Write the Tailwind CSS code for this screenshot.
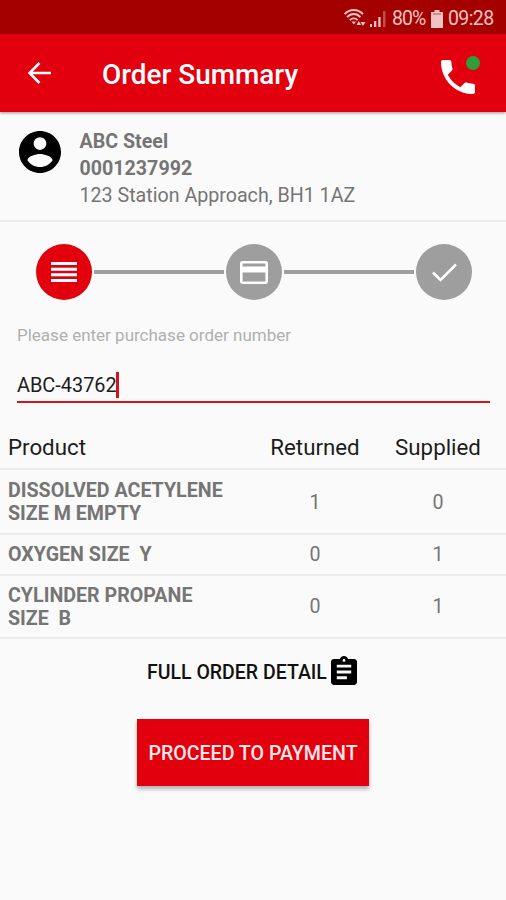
<!DOCTYPE html>
<html lang="en">

<head>
  <meta charset="UTF-8">
  <meta name="viewport" content="width=device-width, initial-scale=1.0">
  <title>Order Summary</title>
  <script src="https://cdn.jsdelivr.net/npm/@tailwindcss/browser@4"></script>
</head>

<body class="bg-[#fafafa] min-h-screen flex flex-col font-['Roboto',sans-serif] text-[#757575] overflow-hidden">
  <!-- Status bar -->
  <div class="h-[34px] bg-[#a50000] flex items-center justify-end pr-3 pt-[3px] text-[#f0c4c4] text-[19.5px]">
    <svg class="w-[24px] h-[19px] -mt-[3px]" viewBox="0 0 23 19" fill="none" stroke="currentColor" stroke-width="1.9">
      <path d="M1 6.2C6 0.5 14.500 0.500 19.500 6.200M3.600 9.200C7.500 5 13 5 16.900 9.200M6.300 12.200C8.500 9.800 12 9.800 14.200 12.200" />
      <path d="M8 13.600h4.600l-2.300 3z" fill="currentColor" stroke="none" />
      <path d="M13 17l2.300-4 2.300 4zM17 14h5l-2.500 4z" fill="currentColor" stroke="none" />
    </svg>
    <svg class="w-[18px] h-[18px] ml-[2px]" viewBox="0 0 18 18" fill="currentColor">
      <path d="M1 14h2v3H1zM5 11h2.300v6H5zM9.300 7h2.300v10H9.300z" />
      <path d="M14 1h2.500v16H14z" opacity=".4" />
    </svg>
    <span class="ml-[5px] w-[34px] whitespace-nowrap tracking-[-0.9px]">80%</span>
    <svg class="w-[12px] h-[18px] ml-[5px]" viewBox="0 0 12 18" fill="currentColor">
      <path d="M3.500 0h5v2H12v16H0V2h3.500z" />
      <path d="M2 4h8" stroke="#a50000" stroke-width="1" opacity=".6" />
    </svg>
    <span class="ml-[5px] w-[46px] whitespace-nowrap tracking-[-0.6px]">09:28</span>
  </div>

  <!-- App bar -->
  <header class="h-[78px] bg-[#e2000f] flex items-center px-[27px] shadow-[0_1px_3px_rgba(0,0,0,0.4)]">
    <svg class="w-6 h-6" viewBox="0 0 24 24" fill="none" stroke="#fff" stroke-width="2.500">
      <path d="M12.500 2L2.500 12l10 10M2.500 12H24" />
    </svg>
    <h1 class="ml-[51px] pt-[4px] text-[27.9px] font-medium text-white whitespace-nowrap">Order Summary</h1>
    <div class="relative ml-auto mr-[4px] mt-[8px]">
      <svg class="w-[34px] h-[34px]" viewBox="3 3 18 18" fill="#fff">
        <path d="M6.620 10.790c1.440 2.830 3.760 5.140 6.590 6.590l2.200-2.200c.270-.270.670-.360 1.020-.240 1.120.370 2.330.570 3.570.570.550 0 1 .450 1 1V20c0 .550-.450 1-1 1-9.390 0-17-7.610-17-17 0-.550.450-1 1-1h3.500c.550 0 1 .450 1 1 0 1.250.200 2.450.570 3.570.110.350.030.740-.250 1.020l-2.200 2.200z" />
      </svg>
      <span class="absolute -right-[5px] -top-[4px] w-[14px] h-[14px] rounded-full bg-[#2e9e3a]"></span>
    </div>
  </header>

  <!-- Customer -->
  <section class="h-[110px] flex pl-[19px] pt-[17px] border-b-2 border-[#ececec]">
    <svg class="w-[42px] h-[42px] mt-[2px]" viewBox="2 2 20 20">
      <path fill="#000" d="M12 2C6.480 2 2 6.480 2 12s4.480 10 10 10 10-4.480 10-10S17.520 2 12 2zm0 3c1.660 0 3 1.340 3 3s-1.340 3-3 3-3-1.340-3-3 1.340-3 3-3zm0 14.200c-2.500 0-4.710-1.280-6-3.220.030-1.990 4-3.080 6-3.080 1.990 0 5.970 1.090 6 3.080-1.290 1.940-3.500 3.220-6 3.220z" />
    </svg>
    <div class="ml-[18.500px] text-[19.65px] leading-[26.800px] whitespace-nowrap">
      <p class="font-bold">ABC Steel</p>
      <p class="font-bold">0001237992</p>
      <p>123 Station Approach, BH1 1AZ</p>
    </div>
  </section>

  <!-- Steps -->
  <div class="flex items-center pl-[36px] pr-[34px] mt-[22px]">
    <div class="w-14 h-14 rounded-full bg-[#e2000f] flex items-center justify-center">
      <svg class="w-[26px] h-[22px]" viewBox="0 0 26 22" fill="#fff">
        <path d="M0 1h26v3H0zM0 6.700h26v3H0zM0 12.300h26v3H0zM0 18h26v3H0z" />
      </svg>
    </div>
    <div class="h-1 flex-1 mx-[2px] bg-[#9e9e9e]"></div>
    <div class="w-14 h-14 rounded-full bg-[#9e9e9e] flex items-center justify-center">
      <svg class="w-[28px] h-[23px]" viewBox="0 0 28 23" fill="none" stroke="#fff">
        <rect x="1.300" y="1.300" width="25.400" height="20.400" rx="1.500" stroke-width="2.600" />
        <path d="M1 8.500h26" stroke-width="6" />
      </svg>
    </div>
    <div class="h-1 flex-1 mx-[2px] bg-[#9e9e9e]"></div>
    <div class="w-14 h-14 rounded-full bg-[#9e9e9e] flex items-center justify-center">
      <svg class="w-[25px] h-[19px]" viewBox="0 0 25 19" fill="none" stroke="#fff" stroke-width="2.500">
        <path d="M1 9.500l7.500 7.500L24 1.500" />
      </svg>
    </div>
  </div>

  <!-- Purchase order number -->
  <div class="ml-[17px] mr-4 mt-[23px]">
    <label class="block h-[24px] leading-[24px] text-[17px] text-[#b0b0b0] whitespace-nowrap">Please enter purchase order number</label>
    <div class="flex items-center h-[31px] mt-[22px] pb-[1px] border-b-2 border-[#d0161c] text-[19.9px] text-[#1c1c1c] box-content">
      <span class="pt-[3px] w-[99px] whitespace-nowrap">ABC-43762</span>
      <span class="w-[3px] h-[26px] bg-[#d0161c]"></span>
    </div>
  </div>

  <!-- Products -->
  <div class="mt-[24px] text-[19.65px] leading-[23px] whitespace-nowrap">
    <div class="h-[43px] grid grid-cols-[245px_124px_122px] items-center pl-2 text-[22.3px] text-[#1c1c1c] border-b-2 border-[#ececec]">
      <span>Product</span>
      <span class="text-center">Returned</span>
      <span class="text-center">Supplied</span>
    </div>
    <div class="h-[65px] grid grid-cols-[245px_124px_122px] items-center pl-2 pt-[1px] border-b-2 border-[#ececec]">
      <span class="font-bold">DISSOLVED ACETYLENE<br>SIZE M EMPTY</span>
      <span class="text-center">1</span>
      <span class="text-center">0</span>
    </div>
    <div class="h-[41px] grid grid-cols-[245px_124px_122px] items-center pl-2 border-b-2 border-[#ececec]">
      <span class="font-bold">OXYGEN SIZE&nbsp; Y</span>
      <span class="text-center">0</span>
      <span class="text-center">1</span>
    </div>
    <div class="h-[63px] grid grid-cols-[245px_124px_122px] items-center pl-2 border-b-2 border-[#ececec]">
      <span class="font-bold">CYLINDER PROPANE<br>SIZE&nbsp; B</span>
      <span class="text-center">0</span>
      <span class="text-center">1</span>
    </div>
  </div>

  <!-- Actions -->
  <a class="flex items-center ml-[147px] mt-[18px] h-[30px] text-[19.5px] font-medium text-[#111] whitespace-nowrap">
    <span class="w-[184px] pt-[1px]">FULL ORDER DETAIL</span>
    <svg class="w-[26px] h-[29px] -mt-[3px]" viewBox="3 1 18 20" fill="#000">
      <path d="M19 3h-4.180C14.400 1.840 13.300 1 12 1c-1.300 0-2.400.840-2.820 2H5c-1.100 0-2 .900-2 2v14c0 1.100.900 2 2 2h14c1.100 0 2-.900 2-2V5c0-1.100-.900-2-2-2zm-7 0c.550 0 1 .450 1 1s-.450 1-1 1-1-.450-1-1 .450-1 1-1zm2 14H7v-2h7v2zm3-4H7v-2h10v2zm0-4H7V7h10v2z" />
    </svg>
  </a>
  <button class="ml-[137px] mt-[32px] w-[232px] h-[67px] pt-[3px] bg-[#e2000f] text-[#ffe8e8] text-[19.6px] font-medium whitespace-nowrap shadow-[0_3px_4px_rgba(0,0,0,0.3)]">PROCEED TO PAYMENT</button>
</body>

</html>
